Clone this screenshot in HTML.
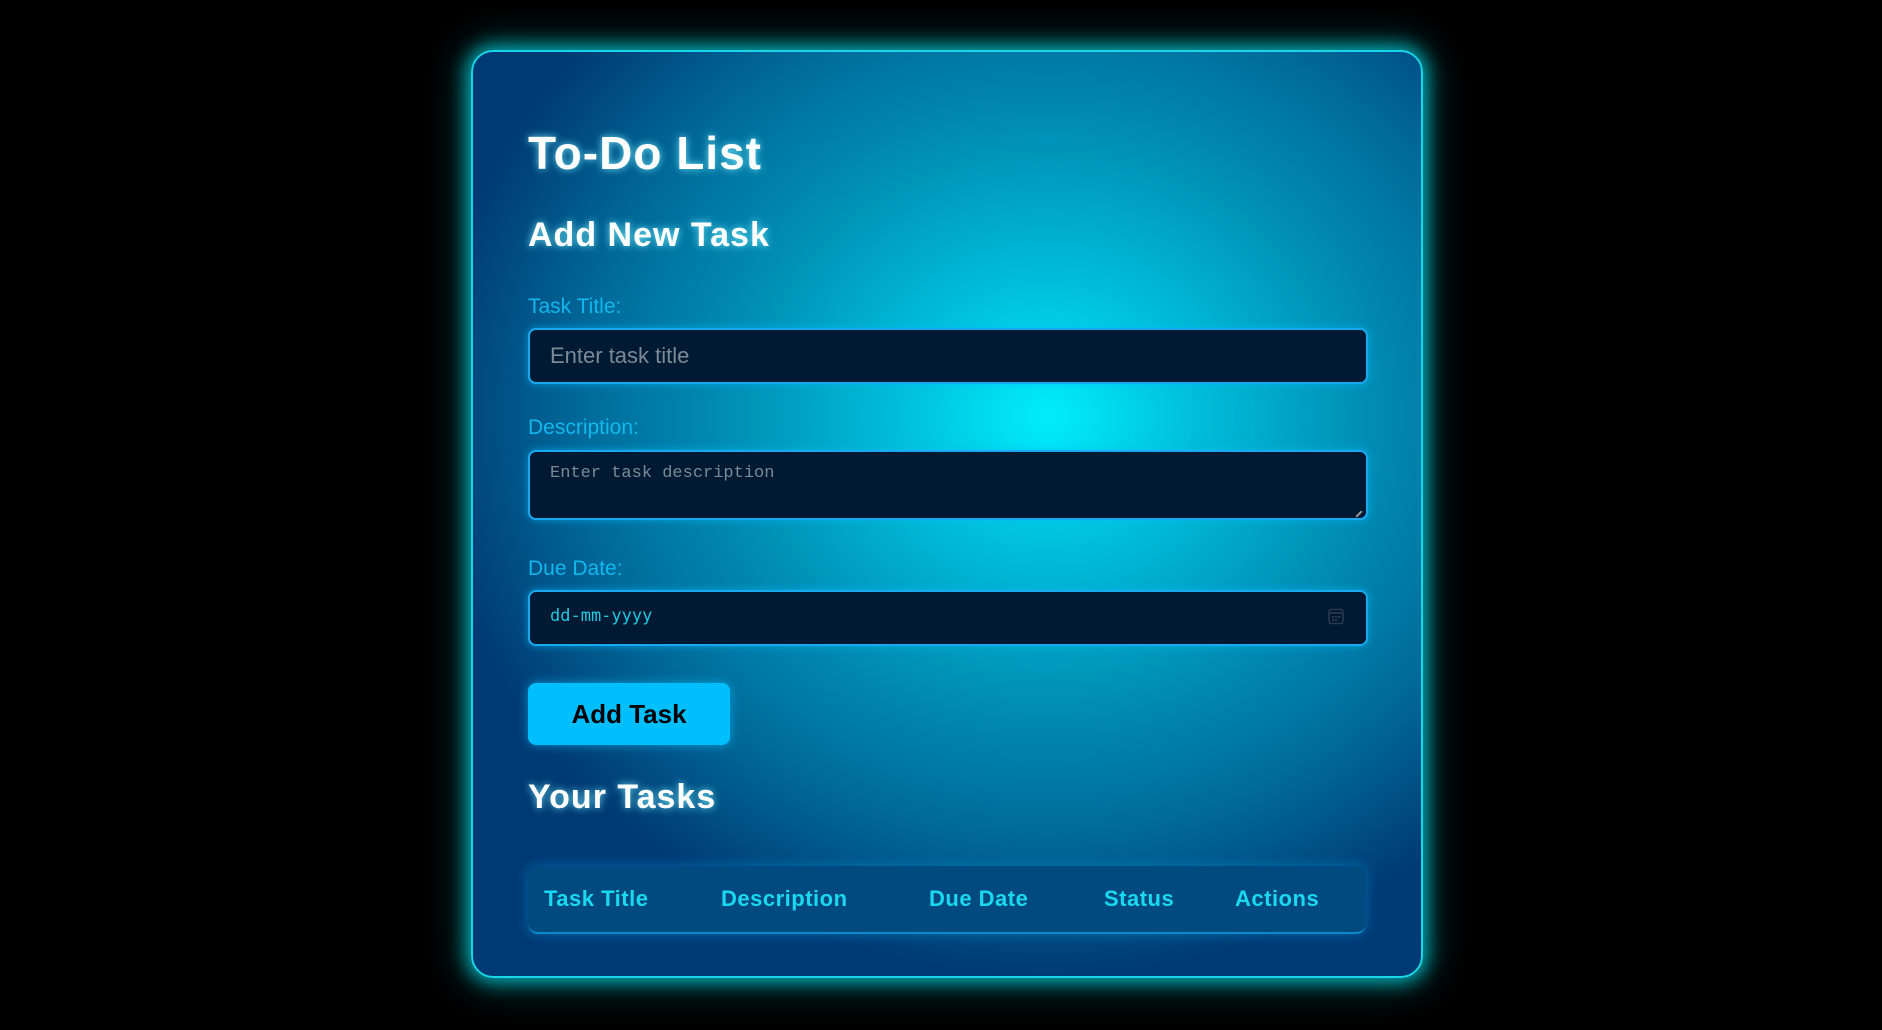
<!DOCTYPE html>
<html><head><meta charset="utf-8"><style>
html,body{margin:0;padding:0;background:#000;width:1882px;height:1030px;overflow:hidden;font-family:"Liberation Sans",sans-serif;}
.card{position:absolute;left:471px;top:50px;width:948px;height:924px;border:2px solid #1ad4e8;border-radius:22px;
background:radial-gradient(ellipse 620px 560px at 574px 364px,#00eefc 0%,#00bcd8 25%,#0090b8 50%,#006a9a 75%,#003a74 100%);
box-shadow:0 0 18px 4px rgba(0,220,230,0.75),0 0 40px 8px rgba(0,170,180,0.35);}
.abs{position:absolute;}
h1{position:absolute;left:55px;top:74px;margin:0;font-size:46px;font-weight:bold;color:#fff;letter-spacing:1px;text-shadow:0 0 8px rgba(120,240,255,0.9);}
h2{position:absolute;left:55px;margin:0;font-size:34px;font-weight:bold;color:#fff;letter-spacing:1px;text-shadow:0 0 8px rgba(120,240,255,0.9);}
.lbl{position:absolute;left:55px;font-size:21px;color:#10b8ee;}
.inp{position:absolute;left:55px;width:836px;background:#001a33;border:2px solid #1aa8ee;border-radius:8px;box-shadow:0 0 8px rgba(0,190,255,0.6);}
.btn{position:absolute;left:55px;top:631px;width:202px;height:62px;background:#00bfff;border-radius:8px;box-shadow:0 0 10px rgba(0,200,255,0.6);color:#000;font-size:26px;font-weight:bold;text-align:center;line-height:62px;}
.tbl{position:absolute;left:55px;top:814px;width:838px;height:66px;background:#004a80;border-radius:10px;border-bottom:2px solid #0a8ac8;box-shadow:0 0 12px rgba(0,150,220,0.5);}
.th{position:absolute;top:20px;font-size:22px;font-weight:bold;color:#1ad8f0;letter-spacing:0.5px;}
</style></head><body>
<div class="card">
<h1>To-Do List</h1>
<h2 style="top:164px">Add New Task</h2>
<div class="lbl" style="top:243px">Task Title:</div>
<div class="inp" style="top:276px;height:52px"><div class="abs" style="left:20px;top:13px;font-size:22px;color:#7b8a95">Enter task title</div></div>
<div class="lbl" style="top:364px">Description:</div>
<div class="inp" style="top:398px;height:66px"><div class="abs" style="left:20px;top:12px;font-family:'Liberation Mono',monospace;font-size:17px;color:#7b8a95">Enter task description</div>
<div class="abs" style="right:3px;bottom:3px;width:8px;height:2px;background:#999;transform:rotate(-45deg)"></div></div>
<div class="lbl" style="top:505px">Due Date:</div>
<div class="inp" style="top:538px;height:52px"><div class="abs" style="left:20px;top:14px;font-family:'DejaVu Sans Mono',monospace;font-size:17px;color:#20c8e0">dd-mm-yyyy</div>
<svg class="abs" style="right:22px;top:16px" width="16" height="17" viewBox="0 0 16 17"><rect x="1" y="1.5" width="14" height="14" rx="2" fill="none" stroke="#2a3a4a" stroke-width="1.5"/><line x1="1" y1="5" x2="15" y2="5" stroke="#2a3a4a" stroke-width="1.5"/><g fill="#2a3a4a"><rect x="4" y="8" width="2" height="2"/><rect x="7" y="8" width="2" height="2"/><rect x="10" y="8" width="2" height="2"/><rect x="4" y="11" width="2" height="2"/><rect x="7" y="11" width="2" height="2"/></g></svg></div>
<div class="btn">Add Task</div>
<h2 style="top:726px">Your Tasks</h2>
<div class="tbl">
<div class="th" style="left:16px">Task Title</div>
<div class="th" style="left:193px">Description</div>
<div class="th" style="left:401px">Due Date</div>
<div class="th" style="left:576px">Status</div>
<div class="th" style="left:707px">Actions</div>
</div>
</div>
</body></html>
